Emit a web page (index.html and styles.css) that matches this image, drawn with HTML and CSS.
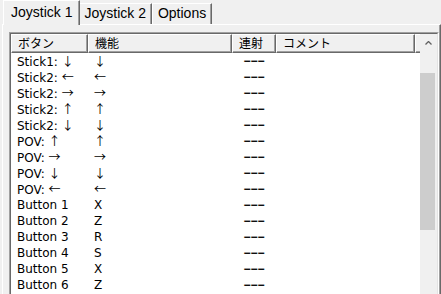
FILE: index.html
```html
<!DOCTYPE html>
<html lang="ja">
<head>
    <meta charset="UTF-8">
    <title>Joystick settings</title>
    <link rel="stylesheet" href="styles.css">
</head>
<body>
    <div class="tabs">
        <div class="tab active">Joystick 1</div>
        <div class="tab">Joystick 2</div>
        <div class="tab">Options</div>
    </div>

    <div class="page">
        <div class="list">
            <div class="list-inner">
                <div class="table">
                    <div class="head">
                        <div class="hcell">ボタン</div>
                        <div class="hcell">機能</div>
                        <div class="hcell">連射</div>
                        <div class="hcell">コメント</div>
                        <div class="hcell"></div>
                    </div>

                    <div class="row"><span>Stick1: <i class="arw">↓</i></span><span class="arw">↓</span><span class="turbo">−−−</span><span></span></div>
                    <div class="row"><span>Stick2: <i class="arw">←</i></span><span class="arw">←</span><span class="turbo">−−−</span><span></span></div>
                    <div class="row"><span>Stick2: <i class="arw">→</i></span><span class="arw">→</span><span class="turbo">−−−</span><span></span></div>
                    <div class="row"><span>Stick2: <i class="arw">↑</i></span><span class="arw">↑</span><span class="turbo">−−−</span><span></span></div>
                    <div class="row"><span>Stick2: <i class="arw">↓</i></span><span class="arw">↓</span><span class="turbo">−−−</span><span></span></div>
                    <div class="row"><span>POV: <i class="arw">↑</i></span><span class="arw">↑</span><span class="turbo">−−−</span><span></span></div>
                    <div class="row"><span>POV: <i class="arw">→</i></span><span class="arw">→</span><span class="turbo">−−−</span><span></span></div>
                    <div class="row"><span>POV: <i class="arw">↓</i></span><span class="arw">↓</span><span class="turbo">−−−</span><span></span></div>
                    <div class="row"><span>POV: <i class="arw">←</i></span><span class="arw">←</span><span class="turbo">−−−</span><span></span></div>
                    <div class="row"><span>Button 1</span><span>X</span><span class="turbo">−−−</span><span></span></div>
                    <div class="row"><span>Button 2</span><span>Z</span><span class="turbo">−−−</span><span></span></div>
                    <div class="row"><span>Button 3</span><span>R</span><span class="turbo">−−−</span><span></span></div>
                    <div class="row"><span>Button 4</span><span>S</span><span class="turbo">−−−</span><span></span></div>
                    <div class="row"><span>Button 5</span><span>X</span><span class="turbo">−−−</span><span></span></div>
                    <div class="row"><span>Button 6</span><span>Z</span><span class="turbo">−−−</span><span></span></div>
                </div>

                <div class="scrollbar">
                    <div class="sb-btn">
                        <svg width="7" height="4" viewBox="0 0 7 4">
                            <path d="M0.5 3.5 L3.5 0.5 L6.5 3.5" fill="none" stroke="#606060" stroke-width="1.3"/>
                        </svg>
                    </div>
                    <div class="sb-thumb"></div>
                </div>
            </div>
        </div>
    </div>
</body>
</html>
```

FILE: styles.css
```css
* {
    box-sizing: border-box;
}

body {
    margin: 0;
    height: 294px;
    overflow: hidden;
    background: #f0f0f0;
    font-family: "Liberation Sans", Arial, sans-serif;
    color: #000;
}

/* tab strip */
.tabs {
    display: flex;
    align-items: flex-end;
    height: 24px;
    padding-left: 5px;
}

.tab {
    height: 21px;
    padding: 0 5px;
    border: 1px solid #fff;
    border-bottom: 0;
    border-right-color: #696969;
    box-shadow: inset -1px 0 0 #a0a0a0;
    background: #f0f0f0;
    font-size: 14px;
    line-height: 18px;
    white-space: nowrap;
}

.tab.active {
    height: 25px;
    margin: 0 -2px -1px;
    padding: 0 7px;
    line-height: 22px;
    position: relative;
    z-index: 1;
}

/* tab page */
.page {
    margin-left: 2px;
    height: 270px;
    overflow: hidden;
    padding: 7px 1px 0 6px;
    border-top: 1px solid #fff;
    border-left: 1px solid #fff;
    border-right: 1px solid #696969;
    box-shadow: inset -1px 0 0 #a0a0a0;
}

.list {
    height: 266px;
    border: 1px solid #a0a0a0;
    border-right-color: #fff;
    border-bottom-color: #fff;
}

.list-inner {
    display: flex;
    height: 100%;
    border: 1px solid #696969;
    border-right-color: #e3e3e3;
    border-bottom-color: #e3e3e3;
    background: #fff;
}

.table {
    flex: 1;
    font-family: "DejaVu Sans", "Noto Sans CJK JP", sans-serif;
    font-size: 12px;
}

.head {
    display: grid;
    grid-template-columns: 77px 144px 44px 139px 5px;
    height: 19px;
}

.hcell {
    padding-left: 6px;
    border: 1px solid #fff;
    border-right-color: #696969;
    border-bottom-color: #696969;
    box-shadow: inset -1px -1px 0 #a0a0a0;
    background: #f0f0f0;
    font-family: "Noto Sans CJK JP", sans-serif;
    line-height: 16px;
    white-space: nowrap;
    overflow: hidden;
}

.row {
    display: grid;
    grid-template-columns: 77px 144px 44px 139px;
    height: 16px;
    line-height: 16px;
}

.row span {
    padding-left: 6px;
    white-space: nowrap;
}

.arw {
    font-style: normal;
    font-family: "Noto Sans CJK JP", sans-serif;
}

.row .turbo {
    padding-left: 0;
    text-align: center;
    font-family: "Liberation Sans", sans-serif;
    font-weight: bold;
}

/* vertical scrollbar */
.scrollbar {
    width: 17px;
    display: flex;
    flex-direction: column;
    background: #f0f0f0;
}

.sb-btn {
    height: 17px;
    display: flex;
    align-items: center;
    justify-content: center;
}

.sb-thumb {
    width: 15px;
    height: 157px;
    margin-top: 22px;
    background: #cdcdcd;
}
```
